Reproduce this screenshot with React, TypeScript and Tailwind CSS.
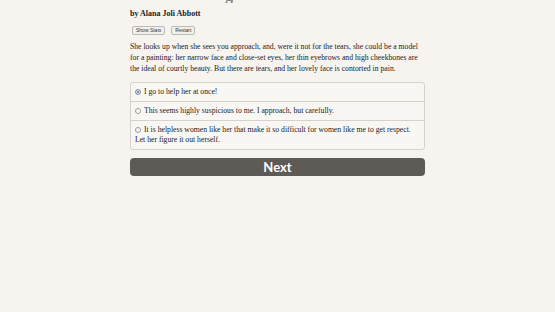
import React from "react";

const serif = { fontFamily: '"Liberation Serif", Georgia, serif' };

export default function App() {
  const opts = [
    "I go to help her at once!",
    "This seems highly suspicious to me. I approach, but carefully.",
    "It is helpless women like her that make it so difficult for women like me to get respect. Let her figure it out herself.",
  ];
  return (
    <div className="w-[555px] h-[312px] bg-[#f7f4f0] overflow-hidden" style={serif}>
      <div className="w-[295px] ml-[130px] text-[#333]">
        <div className="h-[3px] overflow-hidden relative">
          <div className="absolute bottom-[0px] left-[-12px] text-[16px] leading-[16px] font-bold text-[#888] whitespace-nowrap">Mask of the Plague Doctor</div>
        </div>
        <div className="mt-[5px] text-[8px] leading-[11px] font-bold text-[#222]">by Alana Joli Abbott</div>
        <div className="mt-[7px] ml-[2px] flex gap-[6px]">
          <button className="h-[9px] px-[3px] border border-[#bbb] rounded-[2px] bg-[#f3f0ec] text-[5px] leading-[7px] text-[#333]" style={{ fontFamily: '"Liberation Sans", sans-serif' }}>Show Stats</button>
          <button className="h-[9px] px-[3px] border border-[#bbb] rounded-[2px] bg-[#f3f0ec] text-[5px] leading-[7px] text-[#333]" style={{ fontFamily: '"Liberation Sans", sans-serif' }}>Restart</button>
        </div>
        <p className="mt-[6px] text-[7.7px] leading-[11px] text-[#222]">
          She looks up when she sees you approach, and, were it not for the tears, she could be a model for a painting: her narrow face and close-set eyes, her thin eyebrows and high cheekbones are the ideal of courtly beauty. But there are tears, and her lovely face is contorted in pain.
        </p>
        <div className="mt-[8px] border border-[#d6d1cb] rounded-[3px] bg-[#f9f7f4] text-[7.7px] leading-[10px] text-[#222]">
          {opts.map((o, i) => (
            <div key={i} className={`px-[4px] py-[4px] ${i > 0 ? "border-t border-[#d6d1cb]" : ""}`}>
              <span className={`inline-block w-[6px] h-[6px] rounded-full border border-[#999] align-[-1px] mr-[3px] ${i === 0 ? "bg-[#3b6fb6] shadow-[inset_0_0_0_1px_#fff]" : "bg-white"}`}></span>
              {o}
            </div>
          ))}
        </div>
        <button className="mt-[8px] w-full h-[18px] rounded-[4px] bg-[#5e5b57] text-white text-[13px] leading-[18px] font-bold" style={{ fontFamily: 'Lato, "Open Sans", sans-serif' }}>Next</button>
      </div>
    </div>
  );
}
